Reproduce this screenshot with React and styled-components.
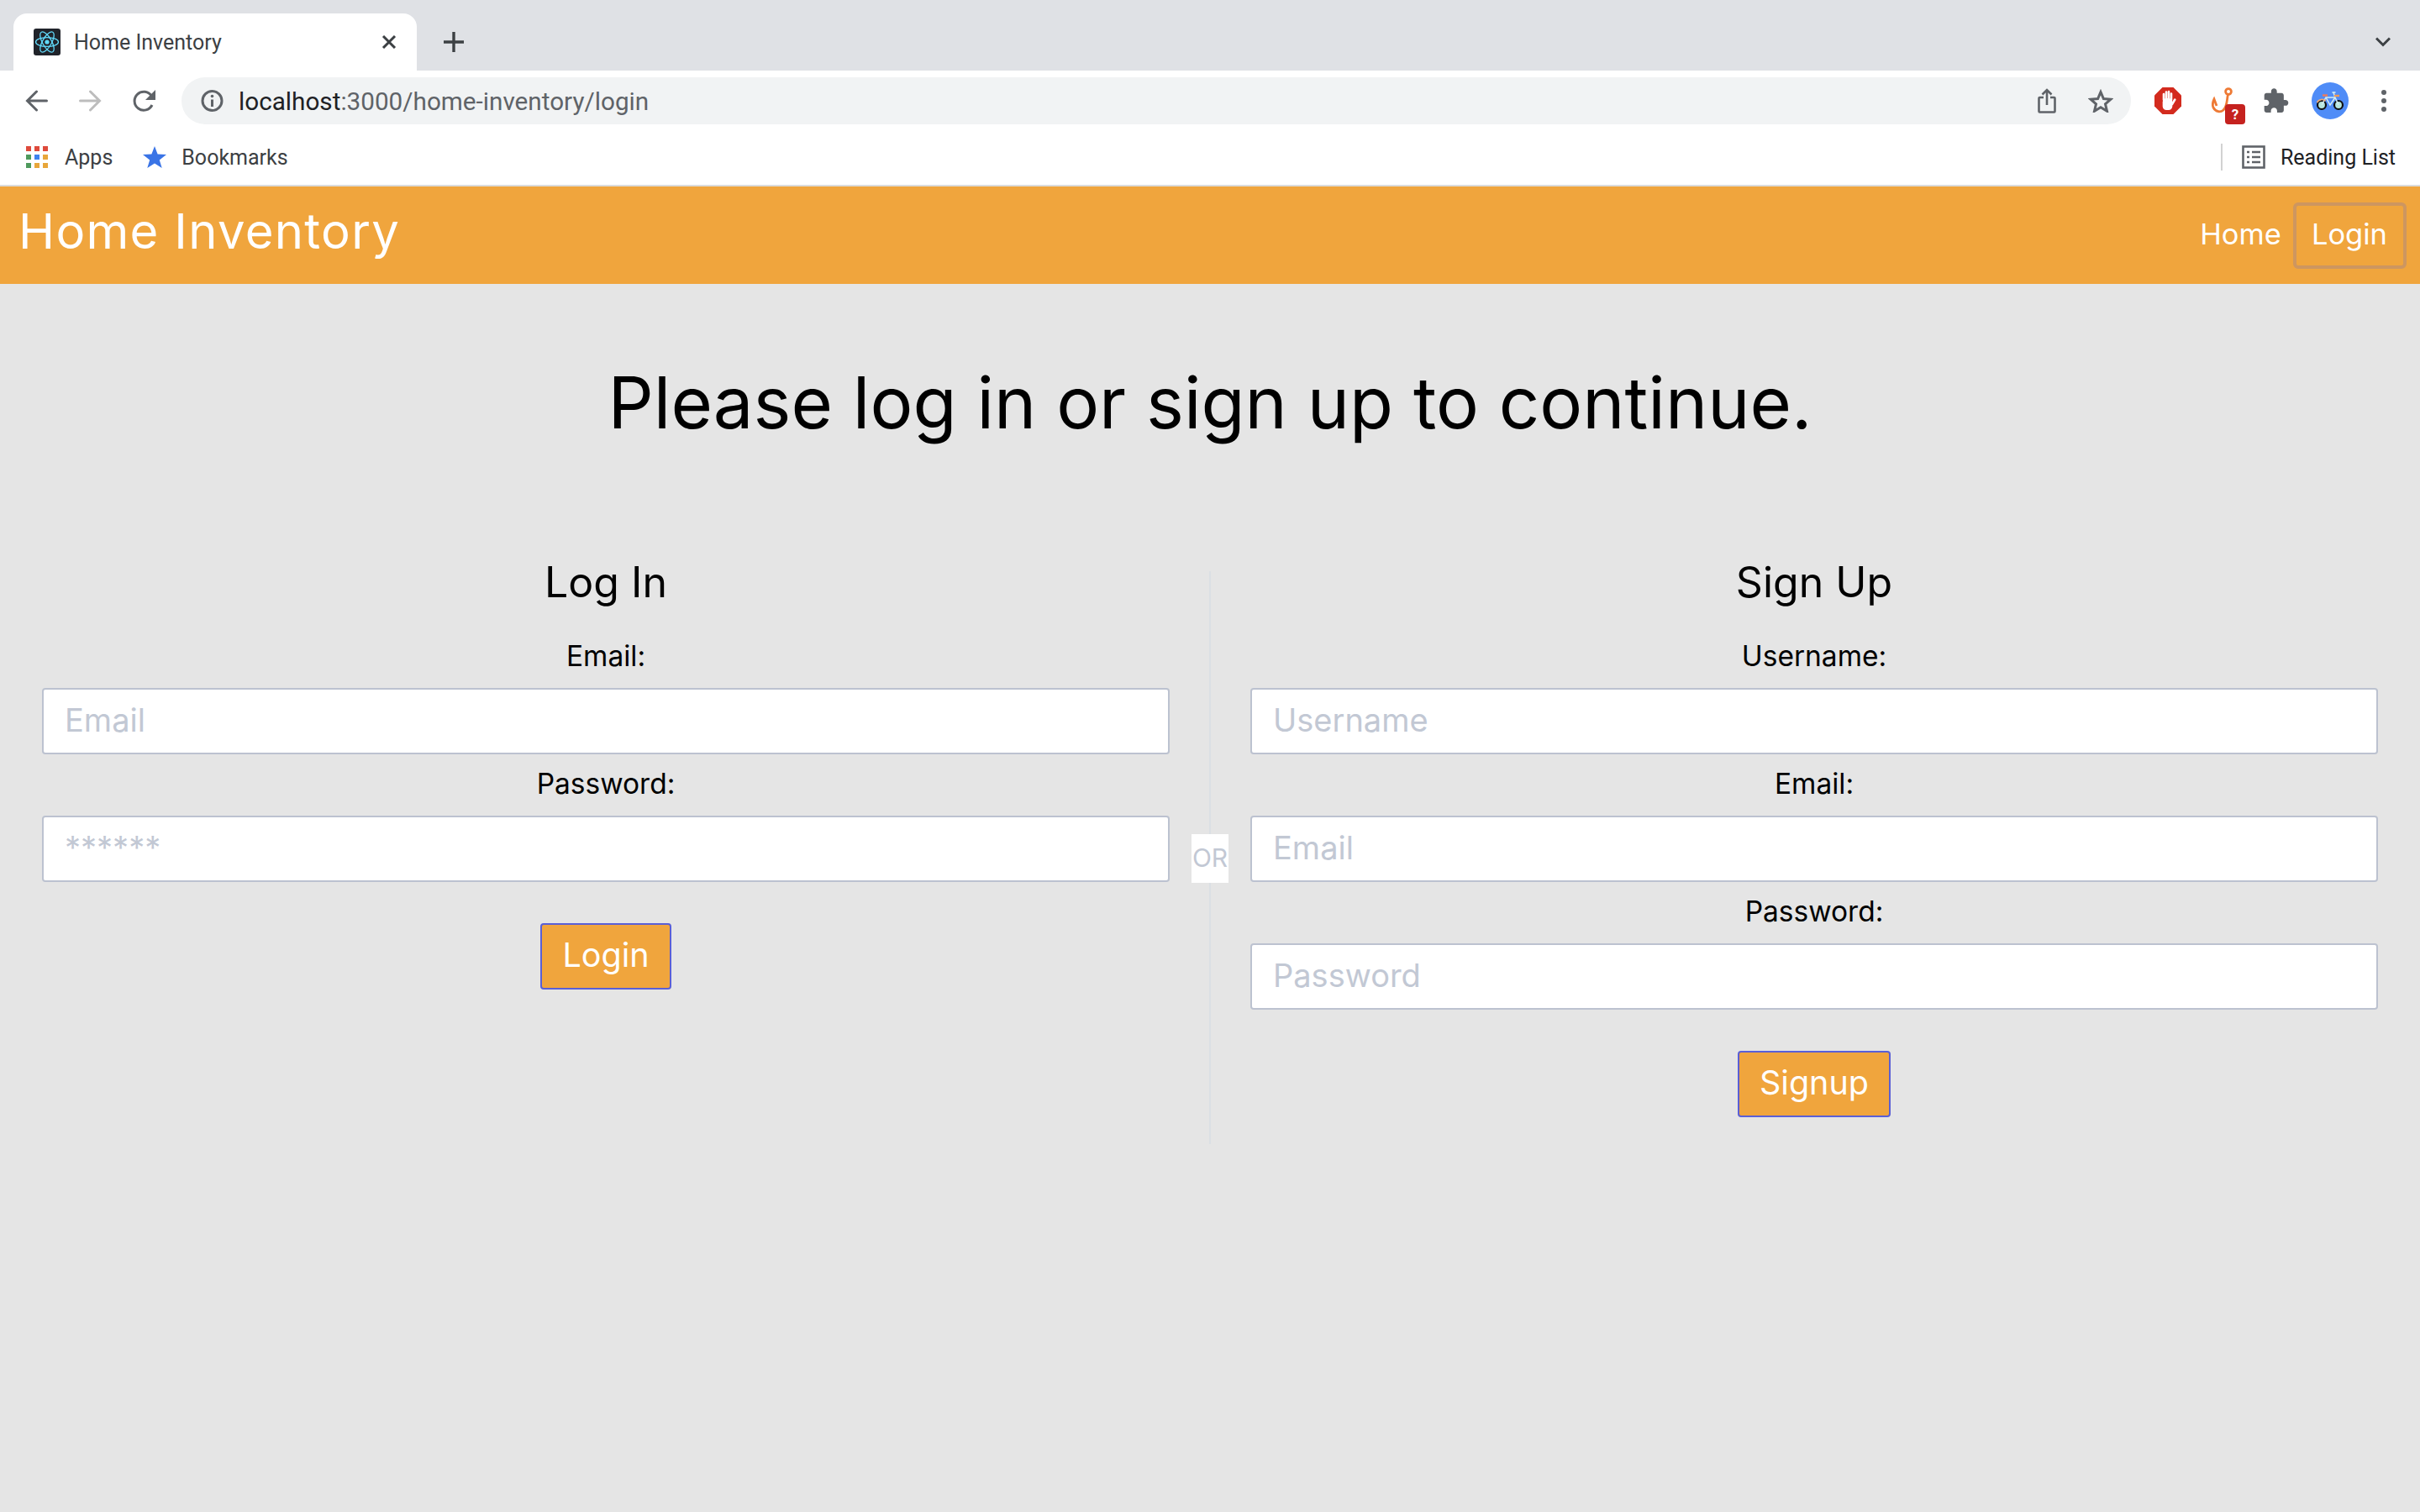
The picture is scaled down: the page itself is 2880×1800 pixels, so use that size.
import React from 'react';
import styled, { createGlobalStyle } from 'styled-components';

const ORANGE = '#f0a53d';

const GlobalStyle = createGlobalStyle`
  html, body {
    margin: 0;
    padding: 0;
    background: #e5e5e5;
  }
  * {
    box-sizing: border-box;
  }
`;

const Page = styled.div`
  width: 2880px;
  height: 1800px;
  display: flex;
  flex-direction: column;
  overflow: hidden;
  background: #e5e5e5;
  font-family: Inter, sans-serif;
`;

const TabStrip = styled.div`
  height: 84px;
  display: flex;
  align-items: flex-end;
  padding: 0 35px 0 16px;
  background: #dfe1e5;
`;

const Tab = styled.div`
  width: 480px;
  height: 68px;
  display: flex;
  align-items: center;
  padding: 0 24px;
  background: #fff;
  border-radius: 16px 16px 0 0;
`;

const TabTitle = styled.span`
  flex: 1;
  margin-left: 16px;
  font: 25px Roboto, sans-serif;
  color: #3c4043;
`;

const NewTab = styled.svg`
  margin: 0 0 22px 32px;
`;

const TabListToggle = styled.svg`
  margin: 0 0 28px auto;
`;

const Toolbar = styled.div`
  height: 64px;
  display: flex;
  align-items: flex-start;
  background: #fff;
  padding: 8px 30px 0 30px;
`;

const NavIcons = styled.div`
  width: 186px;
  height: 56px;
  display: flex;
  align-items: center;
  gap: 37px;
`;

const AddressBar = styled.div`
  width: 2320px;
  height: 56px;
  display: flex;
  align-items: center;
  padding: 0 21px 0 23px;
  background: #f1f3f4;
  border-radius: 28px;
`;

const Url = styled.span`
  flex: 1;
  margin-left: 18px;
  font: 29.7px Roboto, sans-serif;
  color: #5f6368;
`;

const UrlHost = styled.span`
  color: #202124;
`;

const AddressActions = styled.div`
  display: flex;
  align-items: center;
  gap: 38px;
`;

const Extensions = styled.div`
  flex: 1;
  height: 56px;
  display: flex;
  align-items: center;
  padding-left: 28px;
`;

const ExtensionSlot = styled.div`
  position: relative;
  display: flex;
  margin-left: ${p => p.$gap || 0}px;
`;

const Badge = styled.span`
  position: absolute;
  right: -14px;
  bottom: -12px;
  width: 24px;
  height: 24px;
  display: flex;
  align-items: center;
  justify-content: center;
  border-radius: 4px;
  background: #c5221f;
  color: #fff;
  font: bold 17px Roboto, sans-serif;
`;

const BookmarksBar = styled.div`
  height: 74px;
  display: flex;
  align-items: center;
  padding: 6px 29px 0 31px;
  background: #fff;
  border-bottom: 2px solid #dcdcdc;
`;

const Bookmark = styled.div`
  display: flex;
  align-items: center;
  gap: ${p => p.$gap}px;
  margin-right: ${p => p.$after || 0}px;
  font: 25px Roboto, sans-serif;
  color: #3c4043;
`;

const ReadingList = styled.div`
  margin-left: auto;
  display: flex;
  align-items: center;
  gap: 18px;
  height: 32px;
  padding-left: 23px;
  border-left: 2px solid #d2d2d2;
  font: 25px Roboto, sans-serif;
  color: #202124;
`;

const Navbar = styled.header`
  height: 116px;
  display: flex;
  align-items: center;
  justify-content: space-between;
  padding: 0 16px 0 22px;
  background: ${ORANGE};
  color: #fff;
`;

const Brand = styled.div`
  margin-top: -10px;
  font-size: 58px;
  font-weight: 400;
  letter-spacing: 1.3px;
`;

const NavLinks = styled.nav`
  display: flex;
  align-items: center;
  gap: 10px;
`;

const NavLink = styled.a`
  height: 79px;
  display: flex;
  align-items: center;
  padding: 0 19px 4px 18px;
  font-size: 34.5px;
  border: 4px solid ${p => (p.$active ? '#cd9660' : 'transparent')};
  border-radius: 6px;
  margin-right: ${p => (p.$active ? 0 : -19)}px;
`;

const Main = styled.main`
  flex: 1;
  padding: 0 50px;
`;

const Heading = styled.h1`
  margin: 0;
  height: 342px;
  padding-top: 90px;
  text-align: center;
  font-size: 85px;
  font-weight: 400;
  color: #000;
`;

const Columns = styled.div`
  display: grid;
  grid-template-columns: 1342px 96px 1342px;
`;

const Column = styled.section`
  display: flex;
  flex-direction: column;
  align-items: center;
`;

const ColumnTitle = styled.h2`
  margin: -20px 0 34px;
  height: 66px;
  font-size: 50px;
  line-height: 66px;
  font-weight: 400;
  color: #000;
`;

const Field = styled.label`
  width: 100%;
  display: flex;
  flex-direction: column;
  align-items: center;
  margin-bottom: 14px;
`;

const FieldLabel = styled.span`
  height: 59px;
  line-height: 42px;
  font-size: 33.5px;
  color: #000;
`;

const Input = styled.input`
  width: 100%;
  height: 79px;
  padding: 0 25px 3px;
  background: #fff;
  border: 2px solid #bcc2d0;
  border-radius: 4px;
  font: 38px Inter, sans-serif;
  outline: none;

  &::placeholder {
    color: #c2c8d4;
    opacity: 1;
  }
`;

const Submit = styled.button`
  height: 79px;
  margin-top: 35px;
  padding: 0 24px 3px;
  background: ${ORANGE};
  border: 2px solid #5a5fd6;
  border-radius: 4px;
  color: #fff;
  font: 39.5px Inter, sans-serif;
`;

const Divider = styled.div`
  position: relative;
  justify-self: center;
  width: 2px;
  height: 682px;
  background: #dbdfe4;
`;

const OrLabel = styled.span`
  position: absolute;
  top: 313px;
  left: -21px;
  width: 44px;
  height: 58px;
  padding-top: 8px;
  background: #fff;
  color: #c2c8d4;
  font-size: 30px;
  line-height: 40px;
  text-align: center;
`;

const ReactFavicon = () => (
  <svg width="32" height="32" viewBox="0 0 32 32">
    <rect width="32" height="32" rx="3" fill="#20232a" />
    <g fill="none" stroke="#61dafb" strokeWidth="1.3">
      <ellipse cx="16" cy="16" rx="13.5" ry="5.4" />
      <ellipse cx="16" cy="16" rx="13.5" ry="5.4" transform="rotate(60 16 16)" />
      <ellipse cx="16" cy="16" rx="13.5" ry="5.4" transform="rotate(120 16 16)" />
    </g>
    <circle cx="16" cy="16" r="2.6" fill="#61dafb" />
  </svg>
);

const CloseIcon = () => (
  <svg width="18" height="16" viewBox="0 0 18 16" fill="none" stroke="#3c4043" strokeWidth="3">
    <path d="M2 1l14 14M16 1L2 15" />
  </svg>
);

const ArrowIcon = ({ flip, color }) => (
  <svg width="27" height="26" viewBox="0 0 27 26" fill="none" stroke={color} strokeWidth="3" strokeLinecap="round" style={flip ? { transform: 'scaleX(-1)' } : undefined}>
    <path d="M25.5 13H3M13.5 2L2.5 13l11 11" />
  </svg>
);

const ReloadIcon = () => (
  <svg width="28" height="26" viewBox="0 0 28 26" fill="none">
    <path d="M23 18a11 11 0 1 1-.5-10.5" stroke="#5f6368" strokeWidth="3" />
    <path d="M27 0v12H15z" fill="#5f6368" />
  </svg>
);

const InfoIcon = () => (
  <svg width="27" height="26" viewBox="0 0 27 26" fill="none">
    <circle cx="13.5" cy="13" r="11.5" stroke="#5f6368" strokeWidth="3" />
    <path d="M13.5 11.5V20" stroke="#5f6368" strokeWidth="3" />
    <circle cx="13.5" cy="7.5" r="1.8" fill="#5f6368" />
  </svg>
);

const ShareIcon = () => (
  <svg width="22" height="30" viewBox="0 0 22 30" fill="none" stroke="#5f6368" strokeWidth="2.6">
    <path d="M7 11H2.5a1 1 0 0 0-1 1v15.5a1 1 0 0 0 1 1h17a1 1 0 0 0 1-1V12a1 1 0 0 0-1-1H15" />
    <path d="M11 20V2M5.5 7.5L11 2l5.5 5.5" />
  </svg>
);

const StarOutline = () => (
  <svg width="30" height="28" viewBox="0 0 30 28" fill="none" stroke="#5f6368" strokeWidth="3" strokeLinejoin="miter">
    <path d="M15 3.5l3.4 8 8.6.7-6.5 5.7 2 8.4-7.5-4.5-7.5 4.5 2-8.4L3 12.2l8.6-.7z" />
  </svg>
);

const AdblockIcon = () => (
  <svg width="32" height="32" viewBox="0 0 32 32">
    <path d="M9.5 0h13L32 9.5v13L22.5 32h-13L0 22.5v-13z" fill="#d32b1e" />
    <g stroke="#fff" strokeWidth="2.6" strokeLinecap="round">
      <path d="M11 15V8M14 15V5.5M17 15V5M20 15V7.5M21 20l3.3-5.5" />
    </g>
    <rect x="9.7" y="13" width="11.6" height="14" rx="4.5" fill="#fff" />
  </svg>
);

const HookIcon = () => (
  <svg width="28" height="32" viewBox="0 0 28 32" fill="none" stroke="#ee7a35" strokeWidth="2.8">
    <circle cx="22" cy="5" r="3.4" />
    <path d="M21.5 8.5C20 14 21 22 16 27c-3.5 3-9 2.5-12-3-1-2.5-1-6 1-10l3 8" />
  </svg>
);

const PuzzleIcon = () => (
  <svg width="30" height="30" viewBox="1.5 1 22 21.5" fill="#5f6368">
    <path d="M20.5 11H19V7c0-1.1-.9-2-2-2h-4V3.5C13 2.12 11.88 1 10.5 1S8 2.12 8 3.5V5H4c-1.1 0-1.99.9-1.99 2v3.8H3.5c1.49 0 2.7 1.21 2.7 2.7s-1.21 2.7-2.7 2.7H2V20c0 1.1.9 2 2 2h3.8v-1.5c0-1.49 1.21-2.7 2.7-2.7 1.49 0 2.7 1.21 2.7 2.7V22H17c1.1 0 2-.9 2-2v-4h1.5c1.38 0 2.5-1.12 2.5-2.5S21.88 11 20.5 11z" />
  </svg>
);

const AvatarIcon = () => (
  <svg width="44" height="44" viewBox="0 0 44 44">
    <circle cx="22" cy="22" r="22" fill="#4f8cf7" />
    <circle cx="12" cy="27" r="5" fill="#b6e6dc" stroke="#111" strokeWidth="2.2" />
    <circle cx="32" cy="27" r="5" fill="#b6e6dc" stroke="#111" strokeWidth="2.2" />
    <path d="M12 27l5-9h11l4 9M17 18l5 9 6-9M26 12l2 6" fill="none" stroke="#d4edf2" strokeWidth="1.5" />
    <path d="M13 15.5h6" stroke="#ee7b5a" strokeWidth="2.4" />
    <path d="M27 16h6" stroke="#ee9a5a" strokeWidth="2.4" />
    <path d="M24.5 12h4" stroke="#d4edf2" strokeWidth="1.6" />
    <path d="M6.5 24a6.5 6.5 0 0 1 10-2" fill="none" stroke="#f0a872" strokeWidth="1.8" />
  </svg>
);

const KebabIcon = () => (
  <svg width="6" height="26" viewBox="0 0 6 26" fill="#5f6368">
    <circle cx="3" cy="3" r="3" />
    <circle cx="3" cy="13" r="3" />
    <circle cx="3" cy="23" r="3" />
  </svg>
);

const APP_COLORS = ['#de4a3c', '#de4a3c', '#de4a3c', '#4f9a5d', '#3e82ee', '#e8a63a', '#4f9a5d', '#e8a63a', '#e8a63a'];

const AppsIcon = () => (
  <svg width="26" height="26" viewBox="0 0 26 26">
    {APP_COLORS.map((color, i) => (
      <rect key={i} x={(i % 3) * 10} y={Math.floor(i / 3) * 10} width="6" height="6" fill={color} />
    ))}
  </svg>
);

const StarFilled = () => (
  <svg width="28" height="26" viewBox="0 0 28 26" fill="#3a74e6">
    <path d="M14 0l3.6 9.6 10.4.5-8.2 6.5 2.9 9.4-8.7-5.5-8.7 5.5 2.9-9.4L0 10.1l10.4-.5z" />
  </svg>
);

const ReadingListIcon = () => (
  <svg width="28" height="28" viewBox="0 0 28 28" fill="none" stroke="#5f6368">
    <rect x="1.5" y="1.5" width="25" height="25" strokeWidth="2.6" />
    <path d="M6 8h3M12 8h10M6 14h3M12 14h10M6 20h3M12 20h10" strokeWidth="2.6" />
  </svg>
);

const AuthForm = ({ title, fields, action }) => (
  <Column>
    <ColumnTitle>{title}</ColumnTitle>
    {fields.map(field => (
      <Field key={field.label}>
        <FieldLabel>{field.label}</FieldLabel>
        <Input placeholder={field.placeholder} readOnly />
      </Field>
    ))}
    <Submit type="button">{action}</Submit>
  </Column>
);

const App = () => (
  <Page>
    <GlobalStyle />
    <TabStrip>
      <Tab>
        <ReactFavicon />
        <TabTitle>Home Inventory</TabTitle>
        <CloseIcon />
      </Tab>
      <NewTab width="24" height="24" viewBox="0 0 24 24" fill="none" stroke="#3c4043" strokeWidth="3.4">
        <path d="M12 0v24M0 12h24" />
      </NewTab>
      <TabListToggle width="18" height="12" viewBox="0 0 18 12" fill="none" stroke="#3c4043" strokeWidth="3">
        <path d="M1 1.5l8 8 8-8" />
      </TabListToggle>
    </TabStrip>

    <Toolbar>
      <NavIcons>
        <ArrowIcon color="#5f6368" />
        <ArrowIcon flip color="#bdbdbd" />
        <ReloadIcon />
      </NavIcons>
      <AddressBar>
        <InfoIcon />
        <Url><UrlHost>localhost</UrlHost>:3000/home-inventory/login</Url>
        <AddressActions>
          <ShareIcon />
          <StarOutline />
        </AddressActions>
      </AddressBar>
      <Extensions>
        <ExtensionSlot><AdblockIcon /></ExtensionSlot>
        <ExtensionSlot $gap={34}>
          <HookIcon />
          <Badge>?</Badge>
        </ExtensionSlot>
        <ExtensionSlot $gap={36}><PuzzleIcon /></ExtensionSlot>
        <ExtensionSlot $gap={27}><AvatarIcon /></ExtensionSlot>
        <ExtensionSlot $gap={39}><KebabIcon /></ExtensionSlot>
      </Extensions>
    </Toolbar>

    <BookmarksBar>
      <Bookmark $gap={20} $after={36}><AppsIcon />Apps</Bookmark>
      <Bookmark $gap={18}><StarFilled />Bookmarks</Bookmark>
      <ReadingList><ReadingListIcon />Reading List</ReadingList>
    </BookmarksBar>

    <Navbar>
      <Brand>Home Inventory</Brand>
      <NavLinks>
        <NavLink>Home</NavLink>
        <NavLink $active>Login</NavLink>
      </NavLinks>
    </Navbar>

    <Main>
      <Heading>Please log in or sign up to continue.</Heading>
      <Columns>
        <AuthForm
          title="Log In"
          action="Login"
          fields={[
            { label: 'Email:', placeholder: 'Email' },
            { label: 'Password:', placeholder: '******' },
          ]}
        />
        <Divider><OrLabel>OR</OrLabel></Divider>
        <AuthForm
          title="Sign Up"
          action="Signup"
          fields={[
            { label: 'Username:', placeholder: 'Username' },
            { label: 'Email:', placeholder: 'Email' },
            { label: 'Password:', placeholder: 'Password' },
          ]}
        />
      </Columns>
    </Main>
  </Page>
);

export default App;
